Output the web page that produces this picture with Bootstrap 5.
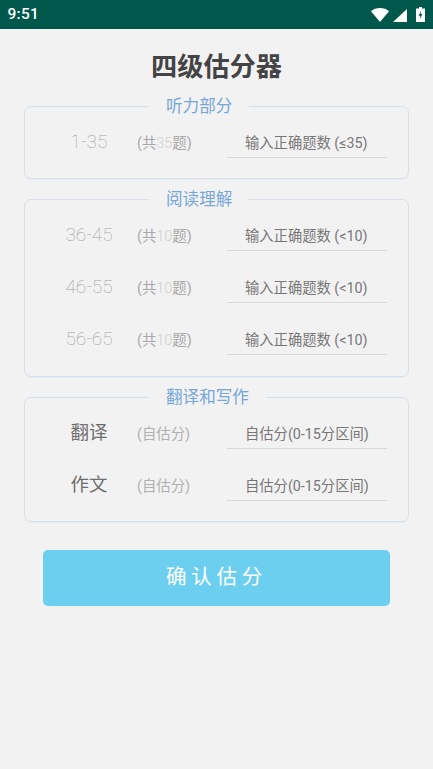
<!DOCTYPE html>
<html lang="zh">
<head>
<meta charset="utf-8">
<title>四级估分器</title>
<link rel="stylesheet" href="https://cdn.jsdelivr.net/npm/bootstrap@5.3.0/dist/css/bootstrap.min.css">
<style>
html,body{height:100%}
body{background:#f2f2f2;font-family:Roboto,"Noto Sans CJK SC",sans-serif;color:#777}
.sbar{height:29px;background:#00574b;color:#fff;padding:0 8px 0 7.5px;font-size:15.5px;font-weight:500;letter-spacing:.3px}
.app-title{font-size:26.2px;font-weight:700;color:#444;margin:0;height:67px;line-height:76px;text-align:center}
.sect{border:1px solid #d6e0ea;border-radius:7px;margin:0 24px 10px;padding:1px 0 9px;box-shadow:0 1px 1px #e6ebf0}
.sect.tall{padding-bottom:10px}
.sect legend{float:none;width:auto;margin:0 0 0 124px;padding:0 17px;font-size:16.6px;line-height:22px;color:#76a7d8;height:20px}
.q-row{height:52px;padding-left:16px;padding-right:21px}
.q-name{width:96px;text-align:center;font-size:19px;font-weight:100;color:#a0a0a0;padding-bottom:1px}
.q-name.strong{font-size:18.5px;font-weight:400;color:#6e6e6e}
.q-sub{width:90px;padding-top:2px;font-size:14.4px;color:#a8a8a8;white-space:nowrap}
.q-sub i{font-style:normal;color:#d0d0d0;font-weight:300}
.q-sub.soft{color:#b0b0b0}
.q-input{width:160px;height:30px;border-bottom:1px solid #d8d8d8;padding-left:18px;font-size:14.3px;line-height:31px;color:#777;white-space:nowrap}
.go-btn{display:block;width:347px;height:56px;margin:28px 0 0 43px;border:0;border-radius:5px;background:#6ccff0;color:#fff;font-size:20.5px;letter-spacing:4.8px;padding:0 0 2px 0}
.go-btn:hover,.go-btn:active{background:#6ccff0!important;color:#fff!important}
</style>
</head>
<body>
<div class="sbar d-flex align-items-center justify-content-between">
  <span>9:51</span>
  <span class="d-flex align-items-end">
    <svg width="18" height="14" viewBox="0 0 18 14" class="me-1"><path d="M0 3.2C2.4 1 5.5 0 9 0s6.6 1 9 3.2L9 14z" fill="#fff"/></svg>
    <svg width="14" height="13" viewBox="0 0 14 13" style="margin-right:9px"><path d="M14 0v13H0z" fill="#fff"/></svg>
    <svg width="9" height="15.5" viewBox="0 0 9 15.5"><path d="M3 0h3v1.5h3v14H0V1.5h3z" fill="#fff"/><path d="M5.2 3.5 2.6 8.8h1.7l-.6 3.6 2.7-5.4H4.6z" fill="#00574b"/></svg>
  </span>
</div>
<h1 class="app-title">四级估分器</h1>

<fieldset class="sect">
  <legend>听力部分</legend>
  <div class="q-row d-flex align-items-center"><div class="q-name">1-35</div><div class="q-sub">(共<i>35</i>题)</div><div class="q-input">输入正确题数 (≤35)</div></div>
</fieldset>

<fieldset class="sect tall">
  <legend>阅读理解</legend>
  <div class="q-row d-flex align-items-center"><div class="q-name">36-45</div><div class="q-sub">(共<i>10</i>题)</div><div class="q-input">输入正确题数 (&lt;10)</div></div>
  <div class="q-row d-flex align-items-center"><div class="q-name">46-55</div><div class="q-sub">(共<i>10</i>题)</div><div class="q-input">输入正确题数 (&lt;10)</div></div>
  <div class="q-row d-flex align-items-center"><div class="q-name">56-65</div><div class="q-sub">(共<i>10</i>题)</div><div class="q-input">输入正确题数 (&lt;10)</div></div>
</fieldset>

<fieldset class="sect">
  <legend>翻译和写作</legend>
  <div class="q-row d-flex align-items-center"><div class="q-name strong">翻译</div><div class="q-sub soft">(自估分)</div><div class="q-input">自估分(0-15分区间)</div></div>
  <div class="q-row d-flex align-items-center"><div class="q-name strong">作文</div><div class="q-sub soft">(自估分)</div><div class="q-input">自估分(0-15分区间)</div></div>
</fieldset>

<button type="button" class="btn go-btn">确认估分</button>
<script src="https://cdn.jsdelivr.net/npm/bootstrap@5.3.0/dist/js/bootstrap.bundle.min.js"></script>
</body>
</html>
